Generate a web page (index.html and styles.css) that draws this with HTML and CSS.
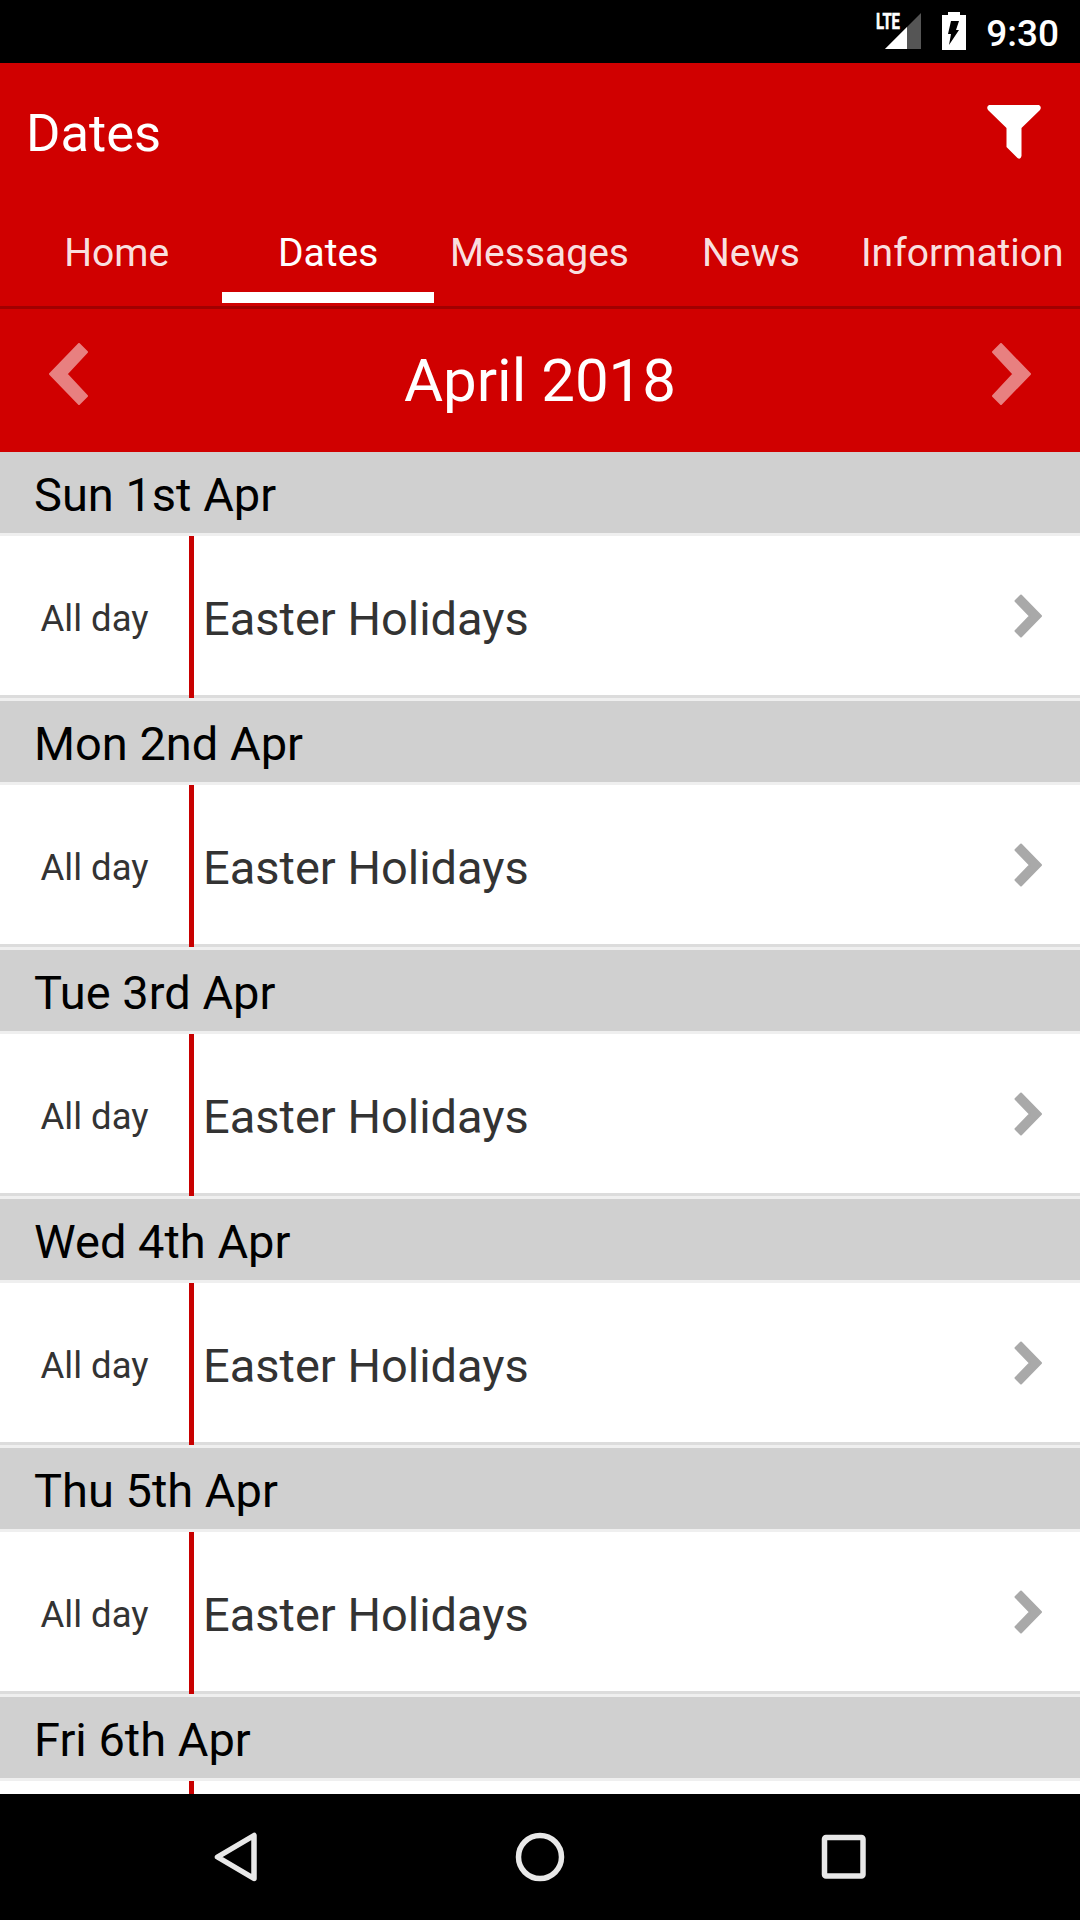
FILE: index.html
```html
<!DOCTYPE html>
<html lang="en">
  <head>
    <meta charset="UTF-8" />
    <meta name="viewport" content="width=device-width, initial-scale=1.0" />
    <title>Dates</title>
    <link rel="stylesheet" href="styles.css">
  </head>
  <body>
    <!-- Status bar -->
    <div class="status-bar">
      <svg class="signal" width="48" height="50" viewBox="0 0 48 50">
        <path d="M47 13V49H11z" fill="#555" />
        <path d="M33 27V49H11z" fill="#fff" />
        <text x="2" y="29" textLength="24" lengthAdjust="spacingAndGlyphs">LTE</text>
      </svg>
      <svg class="battery" width="24" height="38" viewBox="0 0 24 38">
        <path d="M6 0h12v3h6v35H0V3h6z" fill="#fff" />
        <path d="M9 9h8l-3 9h3L7 33l2-11H6z" fill="#000" />
      </svg>
      <span class="clock">9:30</span>
    </div>

    <header>
      <div class="title-bar">
        <h1>Dates</h1>
        <svg class="filter" width="54" height="54" viewBox="0 0 54 54">
          <path d="M2 0h50q3 2 1 5L34.500 23V51q-1 4-4 2L19.500 42V23L1 5q-2-3 1-5z" fill="#fff" />
        </svg>
      </div>
      <nav aria-label="Main Navigation">
        <a class="tab">Home</a>
        <a class="tab active">Dates</a>
        <a class="tab">Messages</a>
        <a class="tab">News</a>
        <a class="tab">Information</a>
      </nav>
    </header>

    <main>
      <div class="month-bar">
        <svg width="40" height="62" viewBox="0 0 40 62">
          <path d="M31 1L39 9L18.500 31L39 53L31 61L2 31z" />
        </svg>
        <h2>April 2018</h2>
        <svg width="40" height="62" viewBox="0 0 40 62">
          <path d="M9 1L1 9L21.500 31L1 53L9 61L38 31z" />
        </svg>
      </div>

      <div class="day-header">Sun 1st Apr</div>
      <div class="event">
        <span class="time">All day</span>
        <span class="name">Easter Holidays</span>
        <svg width="28" height="44" viewBox="0 0 28 44"><path d="M7 1.500L1.500 7L16 22L1.500 37L7 42.500L27 22z" /></svg>
      </div>

      <div class="day-header">Mon 2nd Apr</div>
      <div class="event">
        <span class="time">All day</span>
        <span class="name">Easter Holidays</span>
        <svg width="28" height="44" viewBox="0 0 28 44"><path d="M7 1.500L1.500 7L16 22L1.500 37L7 42.500L27 22z" /></svg>
      </div>

      <div class="day-header">Tue 3rd Apr</div>
      <div class="event">
        <span class="time">All day</span>
        <span class="name">Easter Holidays</span>
        <svg width="28" height="44" viewBox="0 0 28 44"><path d="M7 1.500L1.500 7L16 22L1.500 37L7 42.500L27 22z" /></svg>
      </div>

      <div class="day-header">Wed 4th Apr</div>
      <div class="event">
        <span class="time">All day</span>
        <span class="name">Easter Holidays</span>
        <svg width="28" height="44" viewBox="0 0 28 44"><path d="M7 1.500L1.500 7L16 22L1.500 37L7 42.500L27 22z" /></svg>
      </div>

      <div class="day-header">Thu 5th Apr</div>
      <div class="event">
        <span class="time">All day</span>
        <span class="name">Easter Holidays</span>
        <svg width="28" height="44" viewBox="0 0 28 44"><path d="M7 1.500L1.500 7L16 22L1.500 37L7 42.500L27 22z" /></svg>
      </div>

      <div class="day-header">Fri 6th Apr</div>
      <div class="event"><span class="time"></span></div>
    </main>

    <!-- System buttons -->
    <footer>
      <svg width="72" height="72" viewBox="0 0 72 72">
        <path d="M54 14.500V57.500L17.500 36z" />
      </svg>
      <svg width="72" height="72" viewBox="0 0 72 72">
        <circle cx="36" cy="36" r="21.500" />
      </svg>
      <svg width="72" height="72" viewBox="0 0 72 72">
        <rect x="16.500" y="16.500" width="38.500" height="38.500" rx="1.500" />
      </svg>
    </footer>
  </body>
</html>
```
FILE: styles.css
```css
* {
  margin: 0;
  padding: 0;
  box-sizing: border-box;
}

body {
  display: flex;
  flex-direction: column;
  height: 1920px;
  overflow: hidden;
  background: #fff;
  font-family: Roboto, sans-serif;
}

svg {
  display: block;
  flex-shrink: 0;
}

/* Status bar */
.status-bar {
  display: flex;
  justify-content: flex-end;
  height: 63px;
  padding-right: 21px;
  background: #000;
  color: #fff;
}

.signal text {
  font-size: 22px;
  font-weight: 700;
  fill: #fff;
  stroke: #fff;
  stroke-width: 0.6;
}

.battery {
  margin: 12px 20px 0;
}

.clock {
  font-size: 37px;
  font-weight: 500;
  line-height: 67px;
}

/* Header */
header {
  height: 246px;
  background: #d00000;
  border-bottom: 3px solid #a00000;
  color: #fff;
}

.title-bar {
  display: flex;
  justify-content: space-between;
  align-items: center;
  height: 138px;
  padding: 0 39px 0 26px;
}

h1 {
  padding-top: 2px;
  font-size: 52.5px;
  font-weight: 400;
}

nav {
  display: flex;
  height: 102px;
  padding: 0 12px 0 11px;
}

.tab {
  flex: 1 1 0;
  min-width: 0;
  border-bottom: 11px solid transparent;
  color: rgba(255, 255, 255, 0.9);
  font-size: 39px;
  line-height: 105px;
  text-align: center;
  white-space: nowrap;
}

.tab.active {
  border-bottom-color: #fff;
  color: #fff;
}

/* Month picker */
main {
  height: 1485px;
  overflow: hidden;
}

.month-bar {
  display: flex;
  justify-content: space-between;
  height: 143px;
  padding: 34px 48px 0;
  background: #d00000;
  color: #fff;
}

.month-bar path {
  fill: #e88080;
  stroke: #e88080;
  stroke-width: 2;
  stroke-linejoin: round;
}

h2 {
  font-size: 60px;
  font-weight: 400;
  line-height: 76px;
}

/* Day list */
.day-header {
  height: 84px;
  padding-left: 34px;
  background: #d0d0d0;
  border-bottom: 3px solid #efefef;
  color: #000;
  font-size: 47px;
  line-height: 85px;
}

.event {
  display: flex;
  align-items: center;
  height: 165px;
  padding-right: 38px;
  background: linear-gradient(#fff 159px, #dcdcdc 159px, #dcdcdc 162px, #efefef 162px);
  color: #333;
}

.time {
  align-self: flex-start;
  width: 194px;
  height: 162px;
  border-right: 5px solid #c80000;
  font-size: 36.5px;
  line-height: 166px;
  text-align: center;
}

.name {
  flex: 1;
  padding-left: 9px;
  font-size: 47px;
}

.event svg {
  margin-bottom: 6px;
}

.event path {
  fill: #a9a9a9;
  stroke: #a9a9a9;
  stroke-width: 2;
  stroke-linejoin: round;
}

/* System buttons */
footer {
  display: flex;
  justify-content: center;
  align-items: center;
  gap: 232px;
  height: 126px;
  background: #000;
}

footer svg {
  fill: none;
  stroke: #e8e8e8;
  stroke-width: 5.5;
  stroke-linejoin: round;
}
```
